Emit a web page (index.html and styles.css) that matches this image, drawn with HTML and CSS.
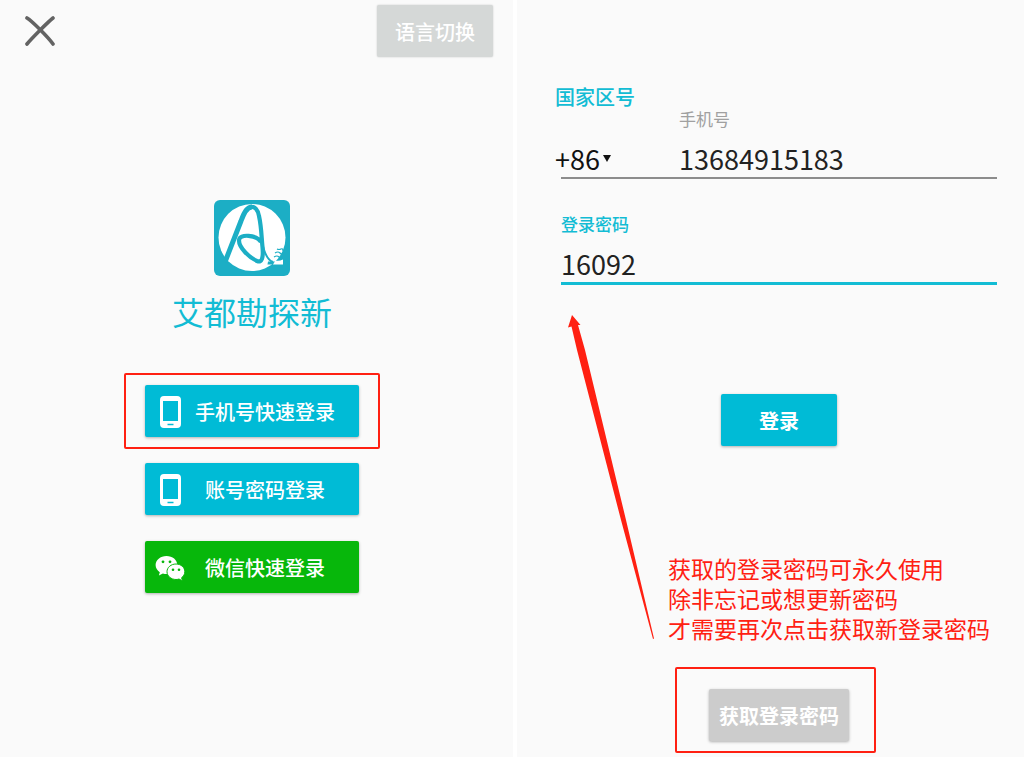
FILE: index.html
```html
<!DOCTYPE html>
<html lang="zh-CN">
<head>
<meta charset="utf-8">
<meta name="viewport" content="width=device-width, initial-scale=1">
<title>艾都勘探新</title>
<link rel="stylesheet" href="styles.css">
</head>
<body>
<main class="screens">
  <section class="screen welcome">
    <header class="topbar">
      <button class="close" type="button" aria-label="关闭">
        <svg width="30" height="30" viewBox="0 0 30 30" fill="none" stroke="#636363" stroke-width="3.6" stroke-linecap="round"><path d="M2 2C7 5 23 21 28 28M28 2C23 6 7 22 2 28"/></svg>
      </button>
      <button class="btn btn-lang" type="button">语言切换</button>
    </header>
    <div class="brand">
      <svg class="logo" viewBox="0 0 76 76" aria-hidden="true">
        <rect width="76" height="76" rx="6" fill="#1caec5"/>
        <circle cx="38" cy="37.500" r="33.500" fill="#fff"/>
        <g fill="none" stroke="#1caec5" stroke-linejoin="round">
          <path stroke-width="5" d="M11 62L27 21C31 10 34 7 38 7"/>
          <path stroke-width="4.200" d="M36 7C41 6 44 10 45 16C47.500 27 47.500 38 48.500 47C49.500 58 48 63 43 61C36 58 25 48 25 40.500C25 33 43 35 47 42"/>
          <path stroke-width="2" d="M48 42C50 52 53 60 59 62"/>
          <path stroke-width="1.200" d="M63 49q2 1 4 0t2 2M61 53q3-2 5 0t3 0M60 57q3-2 5 0t3 0"/>
        </g>
        <path d="M59 64.500l2-4q4 1 8-1v5z" fill="#fff"/>
        <path d="M54 61.500h7l-2.500 3h-5z" fill="#1caec5"/>
      </svg>
      <h1 class="name">艾都勘探新</h1>
    </div>
    <div class="choices">
      <div class="marked marked-choice">
        <button class="btn choice" type="button">
          <svg class="icon" width="30" height="32" viewBox="0 0 30 32" aria-hidden="true"><path fill="#fff" fill-rule="evenodd" d="M9 0h13q4 0 4 4v24q0 4-4 4H9q-4 0-4-4V4q0-4 4-4zM8 5v20h15V5zM12.500 27.700v1.600h6v-1.600z"/></svg>
          <span class="choice-text">手机号快速登录</span>
        </button>
      </div>
      <button class="btn choice" type="button">
        <svg class="icon" width="30" height="32" viewBox="0 0 30 32" aria-hidden="true"><path fill="#fff" fill-rule="evenodd" d="M9 0h13q4 0 4 4v24q0 4-4 4H9q-4 0-4-4V4q0-4 4-4zM8 5v20h15V5zM12.500 27.700v1.600h6v-1.600z"/></svg>
        <span class="choice-text">账号密码登录</span>
      </button>
      <button class="btn choice choice-wechat" type="button">
        <svg class="icon" width="30" height="26" viewBox="0 0 30 26" aria-hidden="true">
          <path fill="#fff" d="M11.500 1C5.300 1 .6 5 .6 10c0 3 1.700 5.600 4.200 7.200L3.900 20.600l4-2.100c1.200.4 2.300.6 3.600.6 6 0 10.800-4 10.800-9.100S17.500 1 11.500 1z"/>
          <path fill="#fff" stroke="#07b70b" stroke-width="1" d="M21 9c-5 0-9 3.400-9 7.700s4 7.800 9 7.800c1.100 0 2.100-.2 3-.5l3.600 1.900-1-3.200c2.100-1.500 3.200-3.600 3.200-6C29.800 12.400 26 9 21 9z"/>
          <g fill="#07b70b"><circle cx="8" cy="6.800" r="1.400"/><circle cx="15" cy="6.800" r="1.400"/><circle cx="18" cy="14.700" r="1.300"/><circle cx="24" cy="14.700" r="1.300"/></g>
        </svg>
        <span class="choice-text">微信快速登录</span>
      </button>
    </div>
  </section>

  <section class="screen signin">
    <form class="form">
      <div class="phone-row">
        <div class="region">
          <label class="region-label" for="region">国家区号</label>
          <div class="region-pick">
            <select class="region-select" id="region"><option>+86</option></select>
            <svg width="8" height="8" viewBox="0 0 8 8" aria-hidden="true"><path fill="#111" d="M0 0h8L4 7z"/></svg>
          </div>
        </div>
        <div class="phone">
          <label class="label" for="phone">手机号</label>
          <input class="input" id="phone" type="tel" value="13684915183">
        </div>
      </div>
      <div class="password">
        <label class="label label-active" for="password">登录密码</label>
        <input class="input" id="password" type="text" value="16092">
      </div>
      <button class="btn btn-login" type="button">登录</button>
      <p class="note">获取的登录密码可永久使用<br>除非忘记或想更新密码<br>才需要再次点击获取新登录密码</p>
      <div class="marked marked-get">
        <button class="btn btn-get" type="button">获取登录密码</button>
      </div>
    </form>
    <svg class="arrow" width="88" height="326" viewBox="0 0 88 326" aria-hidden="true"><path fill="#ff2012" d="M5 1L13.500 11L11 11L18 36L59 206L87 324.500L86 325L54 206L10 36L4.500 12.500L1 13.500Z"/></svg>
  </section>
</main>
</body>
</html>
```
FILE: styles.css
```css
* { box-sizing: border-box; }

body {
  margin: 0;
  background: #fff;
  font-family: "Noto Sans CJK SC", sans-serif;
  color: #222;
}

button, input, select {
  font: inherit;
  color: inherit;
  margin: 0;
  padding: 0;
  border: 0;
  border-radius: 0;
  background: none;
}

.screens {
  display: grid;
  grid-template-columns: 513fr 507fr;
  gap: 4px;
  min-height: 100vh;
}

.screen { background: #fafafa; }

.btn {
  height: 52px;
  padding-top: 2px;
  border-radius: 2px;
  background: #00bbd6;
  color: #fff;
  font-size: 20px;
  font-weight: 500;
  line-height: 28px;
  box-shadow: 0 1px 3px rgba(0, 0, 0, 0.3);
}

/* Welcome screen */
.topbar {
  display: flex;
  justify-content: space-between;
  align-items: center;
  padding: 5px 20px 0 25px;
}

.close { display: flex; }

.btn-lang {
  padding: 2px 18px 0;
  background: #d5d8d7;
  box-shadow: 0 0 2px rgba(0, 0, 0, 0.2);
}

.brand {
  display: flex;
  flex-direction: column;
  align-items: center;
  gap: 15px;
  padding: 143px 9px 0 0;
}

.logo { width: 76px; }

.name {
  margin: 0;
  color: #12bcd4;
  font-size: 32px;
  font-weight: 400;
  line-height: 40px;
}

.choices {
  display: flex;
  flex-direction: column;
  align-items: center;
  gap: 26px;
  padding: 54px 9px 0 0;
}

.choice {
  display: flex;
  align-items: center;
  width: 214px;
  padding: 2px 14px 0 10px;
}

.choice-wechat { background: #07b70b; }

.choice-text { flex: 1; text-align: center; }

/* Red frames drawn around a control */
.marked { position: relative; }

.marked::before {
  content: "";
  position: absolute;
  border: 2px solid #ff2012;
  border-radius: 2px;
  pointer-events: none;
}

.marked-choice::before { inset: -12px -21px; }

.marked-get::before { inset: -22px -27px -12px -34px; }

/* Sign-in screen */
.signin { position: relative; }

.form {
  display: flex;
  flex-direction: column;
  padding: 85px 27px 0 44px;
}

.phone-row {
  display: flex;
  align-items: flex-end;
  border-bottom: 2px solid #8c8c8c;
}

.region {
  display: flex;
  flex-direction: column;
  gap: 32px;
  width: 124px;
  margin-left: -6px;
}

.region-label {
  color: #12bcd4;
  font-size: 20px;
  font-weight: 500;
  line-height: 24px;
}

.region-pick {
  display: flex;
  align-items: center;
  gap: 3px;
  height: 36px;
}

.region-select {
  appearance: none;
  height: 36px;
  color: #111;
  font-size: 27px;
  line-height: 36px;
}

.phone, .password {
  display: flex;
  flex-direction: column;
  gap: 10px;
}

.phone { flex: 1; min-width: 0; }

.label {
  color: #a0a0a0;
  font-size: 17px;
  line-height: 24px;
}

.label-active { color: #12bcd4; font-weight: 500; }

.input {
  width: 100%;
  height: 36px;
  font-size: 27px;
  line-height: 36px;
  outline: 0;
}

.password {
  margin-top: 33px;
  border-bottom: 3px solid #12bcd4;
}

.btn-login {
  align-self: center;
  width: 116px;
  margin-top: 109px;
  font-weight: 700;
}

.note {
  margin: 107px 0 0 107px;
  color: #ff2012;
  font-size: 23px;
  line-height: 30px;
  white-space: nowrap;
}

.marked-get { align-self: center; margin: 46px 0 14px; }

.btn-get {
  padding: 2px 10px 0;
  background: #ccc;
  font-weight: 700;
}

.arrow {
  position: absolute;
  left: 50px;
  top: 314px;
}
```
